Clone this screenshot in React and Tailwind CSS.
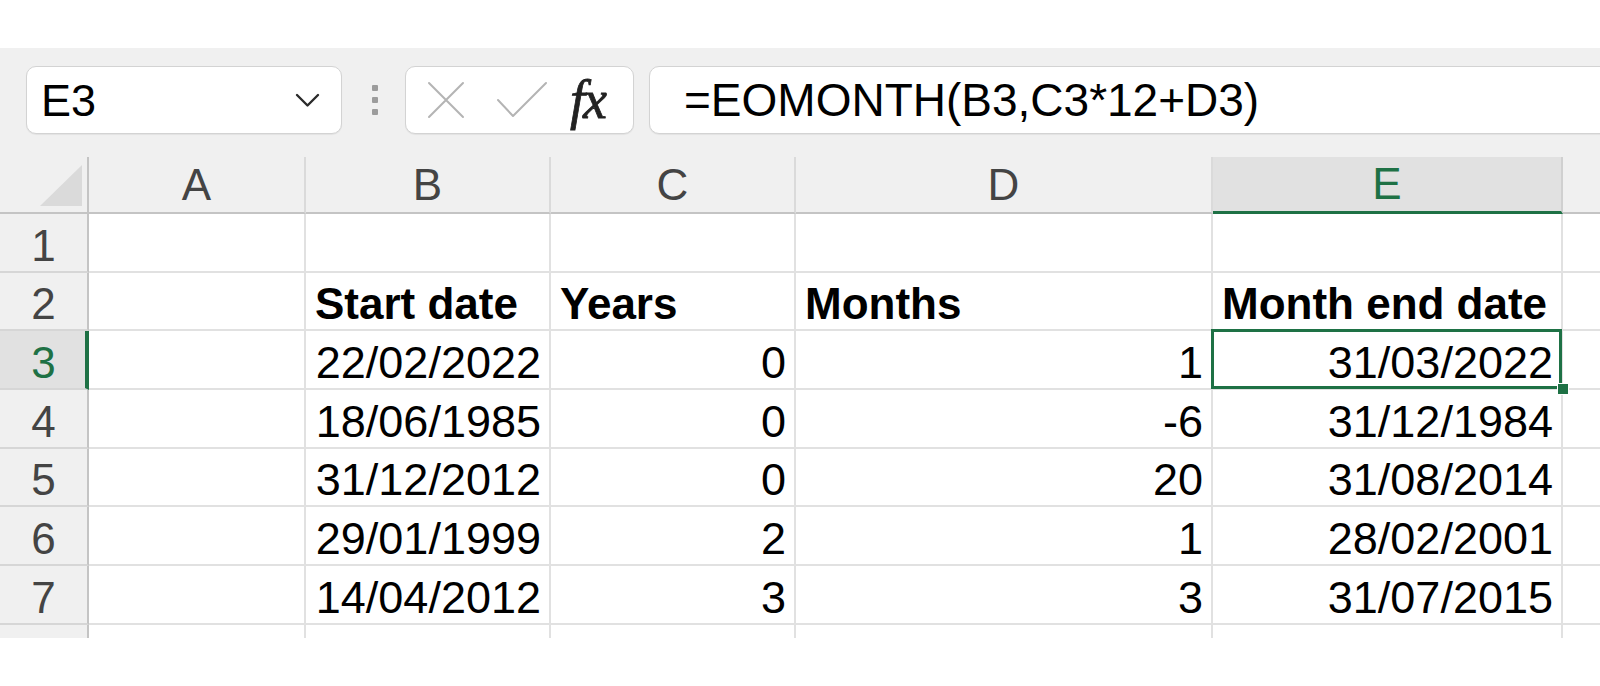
import React from "react";

const FONT = { fontFamily: '"Liberation Sans", Arial, sans-serif' };

const rows = [
  { n: 1, cells: ["", "", "", "", ""] },
  { n: 2, cells: ["", "Start date", "Years", "Months", "Month end date"], head: true },
  { n: 3, cells: ["", "22/02/2022", "0", "1", "31/03/2022"], sel: true },
  { n: 4, cells: ["", "18/06/1985", "0", "-6", "31/12/1984"] },
  { n: 5, cells: ["", "31/12/2012", "0", "20", "31/08/2014"] },
  { n: 6, cells: ["", "29/01/1999", "2", "1", "28/02/2001"] },
  { n: 7, cells: ["", "14/04/2012", "3", "3", "31/07/2015"] },
];

const widths = ["w-[217px]", "w-[245px]", "w-[245px]", "w-[417px]", "w-[350px]"];
const letters = ["A", "B", "C", "D", "E"];

function FormulaBar() {
  return (
    <div className="bg-[#f0f0f0] h-[109px] pt-[18px] flex items-start">
      {/* Name box */}
      <div className="ml-[26px] w-[316px] h-[68px] shrink-0 bg-white border border-[#d3d3d3] rounded-[10px] flex items-center pl-[14px] pr-[21px] shadow-[0_1px_1px_rgba(0,0,0,0.06)]">
        <span className="text-[45px] leading-none text-black flex-1">E3</span>
        <svg width="25" height="15" viewBox="0 0 25 15" fill="none">
          <path d="M2 2 L12.5 12.5 L23 2" stroke="#2b2b2b" strokeWidth="2.4" strokeLinecap="round" strokeLinejoin="round" />
        </svg>
      </div>
      {/* Dots */}
      <div className="ml-[29px] w-[7px] h-[68px] shrink-0 flex flex-col items-center justify-center gap-[6px]">
        <div className="w-[6px] h-[6px] bg-[#9c9c9c] rounded-[1px]" />
        <div className="w-[6px] h-[6px] bg-[#9c9c9c] rounded-[1px]" />
        <div className="w-[6px] h-[6px] bg-[#9c9c9c] rounded-[1px]" />
      </div>
      {/* fx box */}
      <div className="ml-[27px] w-[229px] h-[68px] shrink-0 bg-white border border-[#d3d3d3] rounded-[10px] flex items-center pl-[21px] shadow-[0_1px_1px_rgba(0,0,0,0.06)]">
        <svg width="38" height="38" viewBox="0 0 38 38" fill="none">
          <path d="M2 2 L36 36 M36 2 L2 36" stroke="#b4b4b4" strokeWidth="2" strokeLinecap="round" />
        </svg>
        <svg className="ml-[31px]" width="52" height="38" viewBox="0 0 52 38" fill="none">
          <path d="M2 19 L17 35 L50 2" stroke="#b4b4b4" strokeWidth="2" strokeLinecap="round" strokeLinejoin="round" />
        </svg>
        <span
          className="ml-[22px] text-[54px] leading-none italic text-[#222] tracking-[-2px] [-webkit-text-stroke:0.8px_#222]"
          style={{ fontFamily: '"Liberation Serif", "Times New Roman", serif' }}
        >
          fx
        </span>
      </div>
      {/* Formula box */}
      <div className="ml-[15px] w-[1200px] h-[68px] shrink-0 bg-white border border-[#d3d3d3] rounded-[10px] flex items-center pl-[34px] shadow-[0_1px_1px_rgba(0,0,0,0.06)]">
        <span className="text-[46px] leading-none text-black">=EOMONTH(B3,C3*12+D3)</span>
      </div>
    </div>
  );
}

function HeaderRow() {
  return (
    <div className="flex h-[57px] bg-[#f0f0f0]">
      <div className="w-[89px] shrink-0 border-r-2 border-b-2 border-[#c4c4c4] flex items-end justify-end pr-[5px] pb-[6px]">
        <svg width="42" height="41" viewBox="0 0 42 41">
          <path d="M42 0 L42 41 L0 41 Z" fill="#dadada" />
        </svg>
      </div>
      {letters.map((l, i) => {
        const isE = l === "E";
        return (
          <div
            key={l}
            className={`${widths[i]} shrink-0 flex items-center justify-center text-[44px] leading-none border-r-2 ${
              isE
                ? "bg-[#e1e1e1] border-r-[#d0d0d0] border-b-[3px] border-b-[#1e7145] text-[#1e7145]"
                : "border-r-[#dadada] border-b-2 border-b-[#c4c4c4] text-[#444]"
            }`}
          >
            {l}
          </div>
        );
      })}
      <div className="flex-1 border-b-2 border-[#c4c4c4]" />
    </div>
  );
}

function DataRow({ row }) {
  return (
    <div className="flex h-[58.7px]">
      <div
        className={`w-[89px] shrink-0 flex items-end justify-center text-[44px] leading-[50px] border-b-2 border-b-[#d6d6d6] ${
          row.sel
            ? "bg-[#e1e1e1] border-r-4 border-r-[#1e7145] text-[#1e7145] pl-[2px]"
            : "bg-[#f0f0f0] border-r-2 border-r-[#c4c4c4] text-[#444]"
        }`}
      >
        {row.n}
      </div>
      {row.cells.map((c, i) => {
        const isSel = row.sel && i === 4;
        return (
          <div
            key={i}
            className={`${widths[i]} shrink-0 relative bg-white border-r-2 border-b-2 border-[#e1e1e1] flex items-end leading-[50px] text-black whitespace-nowrap ${
              row.head ? "justify-start pl-[9px] font-bold text-[44px]" : "justify-end pr-[8px] text-[45px]"
            } ${isSel ? "z-10" : ""}`}
          >
            {c}
            {isSel && (
              <>
                <div className="absolute left-[-2px] top-[-2px] w-[351px] h-[60px] border-[3px] border-[#1e7145]" />
                <div className="absolute right-[-8px] bottom-[-7px] w-[12px] h-[12px] bg-[#1e7145] border-[1.5px] border-white" />
              </>
            )}
          </div>
        );
      })}
      <div className="flex-1 bg-white border-b-2 border-[#e1e1e1]" />
    </div>
  );
}

function PartialRow() {
  return (
    <div className="flex h-[13px]">
      <div className="w-[89px] shrink-0 bg-[#f0f0f0] border-r-2 border-[#c4c4c4]" />
      {widths.map((w, i) => (
        <div key={i} className={`${w} shrink-0 bg-white border-r-2 border-[#e1e1e1]`} />
      ))}
      <div className="flex-1 bg-white" />
    </div>
  );
}

export default function App() {
  return (
    <div className="w-[1600px] h-[686px] overflow-hidden bg-white flex flex-col" style={FONT}>
      <div className="h-[48px] shrink-0 bg-white" />
      <FormulaBar />
      <HeaderRow />
      {rows.map((r) => (
        <DataRow key={r.n} row={r} />
      ))}
      <PartialRow />
      <div className="flex-1 bg-white" />
    </div>
  );
}
